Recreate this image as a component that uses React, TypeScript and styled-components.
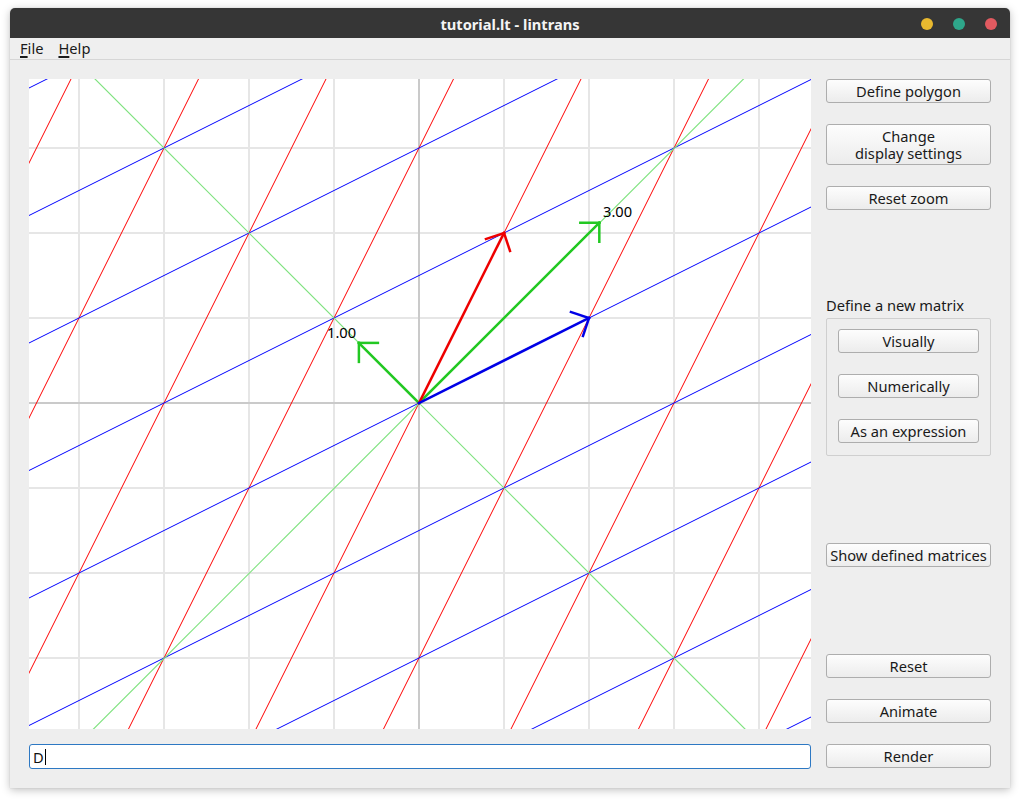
import React from 'react';
import styled, { createGlobalStyle } from 'styled-components';

const Global = createGlobalStyle`
  html, body { margin: 0; padding: 0; background: #ffffff; }
  body { font-family: "Noto Sans", "DejaVu Sans", sans-serif; }
  * { box-sizing: border-box; }
`;

const Screen = styled.div`
  width: 1020px;
  height: 799px;
  padding: 8px 10px 0;
`;

const Window = styled.div`
  width: 1000px;
  height: 780px;
  display: flex;
  flex-direction: column;
  border-radius: 5px 5px 0 0;
  overflow: hidden;
  background: #eeeeee;
  box-shadow: 0 2px 9px rgba(0, 0, 0, 0.25), 0 0 1px rgba(0, 0, 0, 0.25);
`;

const TitleBar = styled.div`
  height: 30px;
  flex: none;
  background: #363636;
  display: grid;
  grid-template-columns: 1fr auto 1fr;
  align-items: center;
`;

const Title = styled.div`
  grid-column: 2;
  color: #f4f4f4;
  font-weight: 700;
  font-size: 14.67px;
  line-height: 30px;
  padding-top: 1px;
`;

const Controls = styled.div`
  grid-column: 3;
  justify-self: end;
  display: flex;
  gap: 20px;
  padding-right: 13px;
`;

const Dot = styled.span<{ $color: string }>`
  width: 12px;
  height: 12px;
  border-radius: 50%;
  background: ${(p) => p.$color};
`;

const MenuBar = styled.div`
  height: 22px;
  flex: none;
  display: flex;
  gap: 15px;
  padding-left: 10px;
  background: #efefef;
  border-bottom: 1px solid #d6d6d6;
`;

const MenuItem = styled.span`
  font-size: 14.67px;
  line-height: 21px;
  color: #1a1a1a;
  u { text-decoration-thickness: 2px; text-underline-offset: 2px; }
`;

const Content = styled.div`
  flex: 1;
  display: flex;
  gap: 15px;
  padding: 19px;
`;

const LeftColumn = styled.div`
  display: flex;
  flex-direction: column;
  gap: 15px;
`;

const Canvas = styled.div`
  width: 782px;
  height: 650px;
  background: #ffffff;
  overflow: hidden;
  svg { display: block; }
`;

const InputBox = styled.div`
  width: 782px;
  height: 25px;
  background: #ffffff;
  border: 1px solid #2d78c3;
  border-radius: 3px;
  padding-left: 3px;
  display: flex;
  align-items: center;
  font-size: 14.67px;
  color: #111;
`;

const Caret = styled.span`
  display: inline-block;
  width: 1px;
  height: 16px;
  background: #000;
  margin-left: 1px;
`;

const RightColumn = styled.div`
  width: 165px;
  display: flex;
  flex-direction: column;
`;

const Button = styled.div<{ $mt?: number; $tall?: boolean }>`
  margin-top: ${(p) => p.$mt ?? 0}px;
  height: ${(p) => (p.$tall ? 41 : 24)}px;
  flex: none;
  border: 1px solid #adadad;
  border-radius: 3px;
  background: linear-gradient(to bottom, #fdfdfd, #ececec);
  display: flex;
  align-items: center;
  justify-content: center;
  font-size: 14.67px;
  line-height: ${(p) => (p.$tall ? 17 : 22)}px;
  color: #1a1a1a;
  white-space: nowrap;
  text-align: center;
`;

const GroupLabel = styled.div<{ $mt: number }>`
  margin-top: ${(p) => p.$mt}px;
  height: 18px;
  font-size: 14.67px;
  line-height: 18px;
  color: #1a1a1a;
`;

const GroupBox = styled.div`
  margin-top: 4px;
  border: 1px solid #cfcfcf;
  border-radius: 2px;
  padding: 10px 11px 12px 11px;
  display: flex;
  flex-direction: column;
  gap: 21px;
`;

const W = 782;
const H = 650;
const S = 85;
const OX = 390;
const OY = 324;

type Seg = { x1: number; y1: number; x2: number; y2: number };

function family(px: number, py: number, dx: number, dy: number): Seg[] {
  const out: Seg[] = [];
  for (let n = -14; n <= 14; n++) {
    const cx = OX + px * n;
    const cy = OY + py * n;
    out.push({ x1: cx - dx * 12, y1: cy - dy * 12, x2: cx + dx * 12, y2: cy + dy * 12 });
  }
  return out;
}

function arrowHead(tx: number, ty: number): Seg[] {
  const len = Math.hypot(tx - OX, ty - OY);
  const rx = (OX - tx) / len;
  const ry = (OY - ty) / len;
  const c = Math.SQRT1_2;
  const L = 19;
  const a = { x: c * (rx - ry), y: c * (rx + ry) };
  const b = { x: c * (rx + ry), y: c * (-rx + ry) };
  return [
    { x1: tx, y1: ty, x2: tx + a.x * L, y2: ty + a.y * L },
    { x1: tx, y1: ty, x2: tx + b.x * L, y2: ty + b.y * L },
  ];
}

const Arrow: React.FC<{ tx: number; ty: number; color: string }> = ({ tx, ty, color }) => (
  <g stroke={color} strokeWidth={2.5} strokeLinecap="square" fill="none">
    <line x1={OX} y1={OY} x2={tx} y2={ty} />
    {arrowHead(tx, ty).map((s, i) => (
      <line key={i} x1={s.x1} y1={s.y1} x2={s.x2} y2={s.y2} />
    ))}
  </g>
);

const Plot: React.FC = () => {
  const vx: number[] = [];
  for (let k = -5; k <= 5; k++) {
    const x = OX + k * S;
    if (x > 0 && x < W && k !== 0) vx.push(x);
  }
  const hy: number[] = [];
  for (let k = -5; k <= 5; k++) {
    const y = OY + k * S;
    if (y > 0 && y < H && k !== 0) hy.push(y);
  }
  const red = family(2 * S, -S, S, -2 * S);
  const blue = family(S, -2 * S, 2 * S, -S);
  const e = 2.1213 * S;
  const e2 = 0.7071 * S;
  return (
    <svg width={W} height={H} viewBox={`0 0 ${W} ${H}`}>
      <g stroke="#e6e6e6" strokeWidth={2}>
        {vx.map((x) => (
          <line key={'v' + x} x1={x} y1={0} x2={x} y2={H} />
        ))}
        {hy.map((y) => (
          <line key={'h' + y} x1={0} y1={y} x2={W} y2={y} />
        ))}
      </g>
      <g stroke="#cacaca" strokeWidth={2}>
        <line x1={OX} y1={0} x2={OX} y2={H} />
        <line x1={0} y1={OY} x2={W} y2={OY} />
      </g>
      <g stroke="#ff0000" strokeWidth={1}>
        {red.map((s, i) => (
          <line key={i} x1={s.x1} y1={s.y1} x2={s.x2} y2={s.y2} />
        ))}
      </g>
      <g stroke="#0000ff" strokeWidth={1}>
        {blue.map((s, i) => (
          <line key={i} x1={s.x1} y1={s.y1} x2={s.x2} y2={s.y2} />
        ))}
      </g>
      <g stroke="#7ee27e" strokeWidth={1.15} fill="none">
        <path d={`M ${OX - 400} ${OY - 400} L ${OX + 400} ${OY + 400}`} />
        <path d={`M ${OX - 399.5} ${OY + 400} L ${OX + 400.5} ${OY - 400}`} />
      </g>
      <Arrow tx={OX + e} ty={OY - e} color="#22c822" />
      <Arrow tx={OX - e2} ty={OY - e2} color="#22c822" />
      <Arrow tx={OX + S} ty={OY - 2 * S} color="#ee0000" />
      <Arrow tx={OX + 2 * S} ty={OY - S} color="#0000e6" />
      <g fill="#000" fontSize="14.67" fontFamily='"Noto Sans", "DejaVu Sans", sans-serif'>
        <text x={298} y={259}>1.00</text>
        <text x={574} y={138}>3.00</text>
      </g>
    </svg>
  );
};

export default function App() {
  return (
    <>
      <Global />
      <Screen>
        <Window>
          <TitleBar>
            <Title>tutorial.lt - lintrans</Title>
            <Controls>
              <Dot $color="#e9b92f" />
              <Dot $color="#2ea68a" />
              <Dot $color="#e15a60" />
            </Controls>
          </TitleBar>
          <MenuBar>
            <MenuItem>
              <u>F</u>ile
            </MenuItem>
            <MenuItem>
              <u>H</u>elp
            </MenuItem>
          </MenuBar>
          <Content>
            <LeftColumn>
              <Canvas>
                <Plot />
              </Canvas>
              <InputBox>
                D<Caret />
              </InputBox>
            </LeftColumn>
            <RightColumn>
              <Button>Define polygon</Button>
              <Button $mt={21} $tall>
                <span>
                  Change
                  <br />
                  display settings
                </span>
              </Button>
              <Button $mt={21}>Reset zoom</Button>
              <GroupLabel $mt={86}>Define a new matrix</GroupLabel>
              <GroupBox>
                <Button>Visually</Button>
                <Button>Numerically</Button>
                <Button>As an expression</Button>
              </GroupBox>
              <Button $mt={87}>Show defined matrices</Button>
              <Button $mt={87}>Reset</Button>
              <Button $mt={21}>Animate</Button>
              <Button $mt={21}>Render</Button>
            </RightColumn>
          </Content>
        </Window>
      </Screen>
    </>
  );
}
